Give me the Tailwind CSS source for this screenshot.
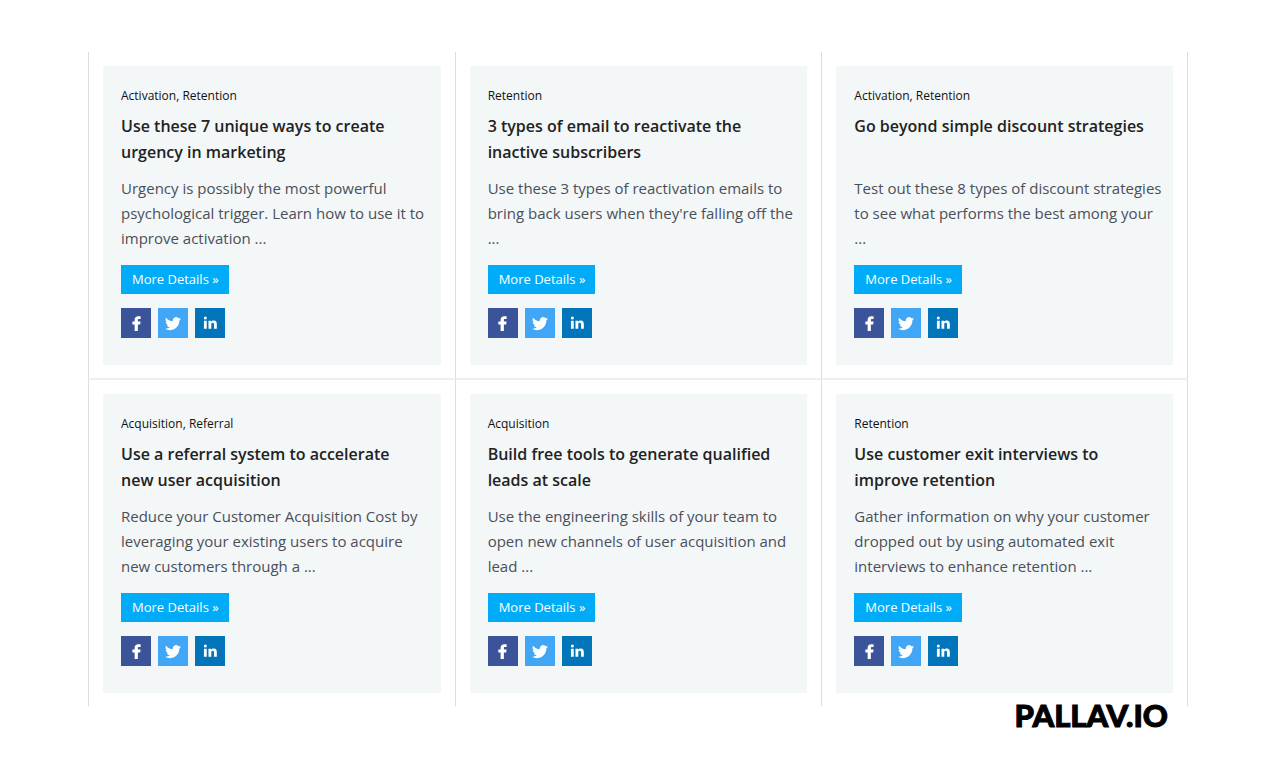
<!DOCTYPE html>
<html lang="en">
<head>
  <meta charset="UTF-8">
  <title>Growth Tactics</title>
  <meta name="viewport" content="width=device-width, initial-scale=1">
  <!-- Tailwind CSS CDN -->
  <script src="https://cdn.jsdelivr.net/npm/@tailwindcss/browser@4"></script>
</head>
<body class="bg-white font-['Open_Sans',sans-serif]">

<div class="min-h-screen pt-[52px] pl-[88px] pr-[82px]">
  <main class="grid grid-cols-3" id="tactics"></main>

  <footer class="-mt-[9px] flex justify-end pr-5">
    <a href="#" class="font-['Lato',sans-serif] font-black text-[31px] leading-9 text-black [-webkit-text-stroke:1px_#000]">PALLAV.IO</a>
  </footer>
</div>

<script>
  // --------- Data ------------
  const tactics = [
    {
      tags: "Activation, Retention",
      title: "Use these 7 unique ways to create urgency in marketing",
      summary: "Urgency is possibly the most powerful psychological trigger. Learn how to use it to improve activation ..."
    },
    {
      tags: "Retention",
      title: "3 types of email to reactivate the inactive subscribers",
      summary: "Use these 3 types of reactivation emails to bring back users when they're falling off the ..."
    },
    {
      tags: "Activation, Retention",
      title: "Go beyond simple discount strategies",
      summary: "Test out these 8 types of discount strategies to see what performs the best among your ..."
    },
    {
      tags: "Acquisition, Referral",
      title: "Use a referral system to accelerate new user acquisition",
      summary: "Reduce your Customer Acquisition Cost by leveraging your existing users to acquire new customers through a ..."
    },
    {
      tags: "Acquisition",
      title: "Build free tools to generate qualified leads at scale",
      summary: "Use the engineering skills of your team to open new channels of user acquisition and lead ..."
    },
    {
      tags: "Retention",
      title: "Use customer exit interviews to improve retention",
      summary: "Gather information on why your customer dropped out by using automated exit interviews to enhance retention ..."
    }
  ];

  // --------- Share icons ------------
  const shareLinks = `
    <a href="#" aria-label="Share on Facebook" class="flex size-[30px] items-center justify-center bg-[#3b5499] text-white">
      <svg class="size-[15px]" viewBox="0 0 24 24" fill="currentColor"><path d="M18.6.6v4.2h-2.4c-1.7 0-2 .8-2 1.9v2.2h4.3l-.6 4.5h-3.7V24H9V13.4H5.4V8.9H9V6c0-3.7 2.3-5.7 5.8-5.7 1.6 0 3.2.1 3.8.3z"/></svg>
    </a>
    <a href="#" aria-label="Share on Twitter" class="flex size-[30px] items-center justify-center bg-[#40a6f5] text-white">
      <svg class="size-4" viewBox="0 -1 24 24" fill="currentColor"><path d="M23.95 4.57a10 10 0 0 1-2.82.77 4.96 4.96 0 0 0 2.16-2.72c-.95.55-2 .95-3.13 1.18a4.92 4.92 0 0 0-8.38 4.48A13.93 13.93 0 0 1 1.64 3.16a4.92 4.92 0 0 0 1.52 6.57 4.9 4.9 0 0 1-2.23-.61v.06a4.92 4.92 0 0 0 3.95 4.83 5 5 0 0 1-2.21.08 4.94 4.94 0 0 0 4.6 3.42A9.87 9.87 0 0 1 0 19.54a13.94 13.94 0 0 0 7.55 2.21c9.05 0 14-7.5 14-13.98 0-.21 0-.42-.02-.63a9.94 9.94 0 0 0 2.42-2.57z"/></svg>
    </a>
    <a href="#" aria-label="Share on LinkedIn" class="flex size-[30px] items-center justify-center bg-[#0274b9] text-white">
      <svg class="size-[14px]" viewBox="0 0 24 24" fill="currentColor"><path d="M1.6 8.2h4.8v13.6H1.6zM4 1a2.6 2.6 0 1 1 0 5.2A2.6 2.6 0 0 1 4 1zM9.4 8.2H14v1.9c.9-1.4 2.5-2.3 4.5-2.3 4.1 0 5.2 2.6 5.2 6.1v7.9h-4.8v-7c0-1.9-.2-3.1-2.2-3.1-2.1 0-2.5 1.4-2.5 3.1v7H9.4z"/></svg>
    </a>
  `;

  // --------- Render ------------
  document.getElementById("tactics").innerHTML = tactics.map(tactic => `
    <div class="border-l border-[#dddddd] px-[14px] pt-[14px] pb-[13px] nth-[3n]:border-r nth-[-n+3]:border-b-2 nth-[-n+3]:border-b-[#eeeeee]">
      <article class="bg-[#f3f7f8] pl-[18px] pr-2 pt-[21px] pb-[27px]">
        <p class="text-xs leading-[18px] text-[#111111]">${tactic.tags}</p>
        <h2 class="mt-2 min-h-[52px] pr-[10px] text-base leading-[26px] font-semibold text-[#222222]">${tactic.title}</h2>
        <p class="mt-[11px] text-[15px] leading-[25px] text-[#4b4f58]">${tactic.summary}</p>
        <a href="#" class="mt-[14px] block w-fit bg-[#00acf8] pl-[11px] pr-[10px] text-[13px] leading-[29px] font-medium text-white">More Details »</a>
        <div class="mt-[14px] flex gap-[7px]">${shareLinks}</div>
      </article>
    </div>
  `).join("");
</script>
</body>
</html>
